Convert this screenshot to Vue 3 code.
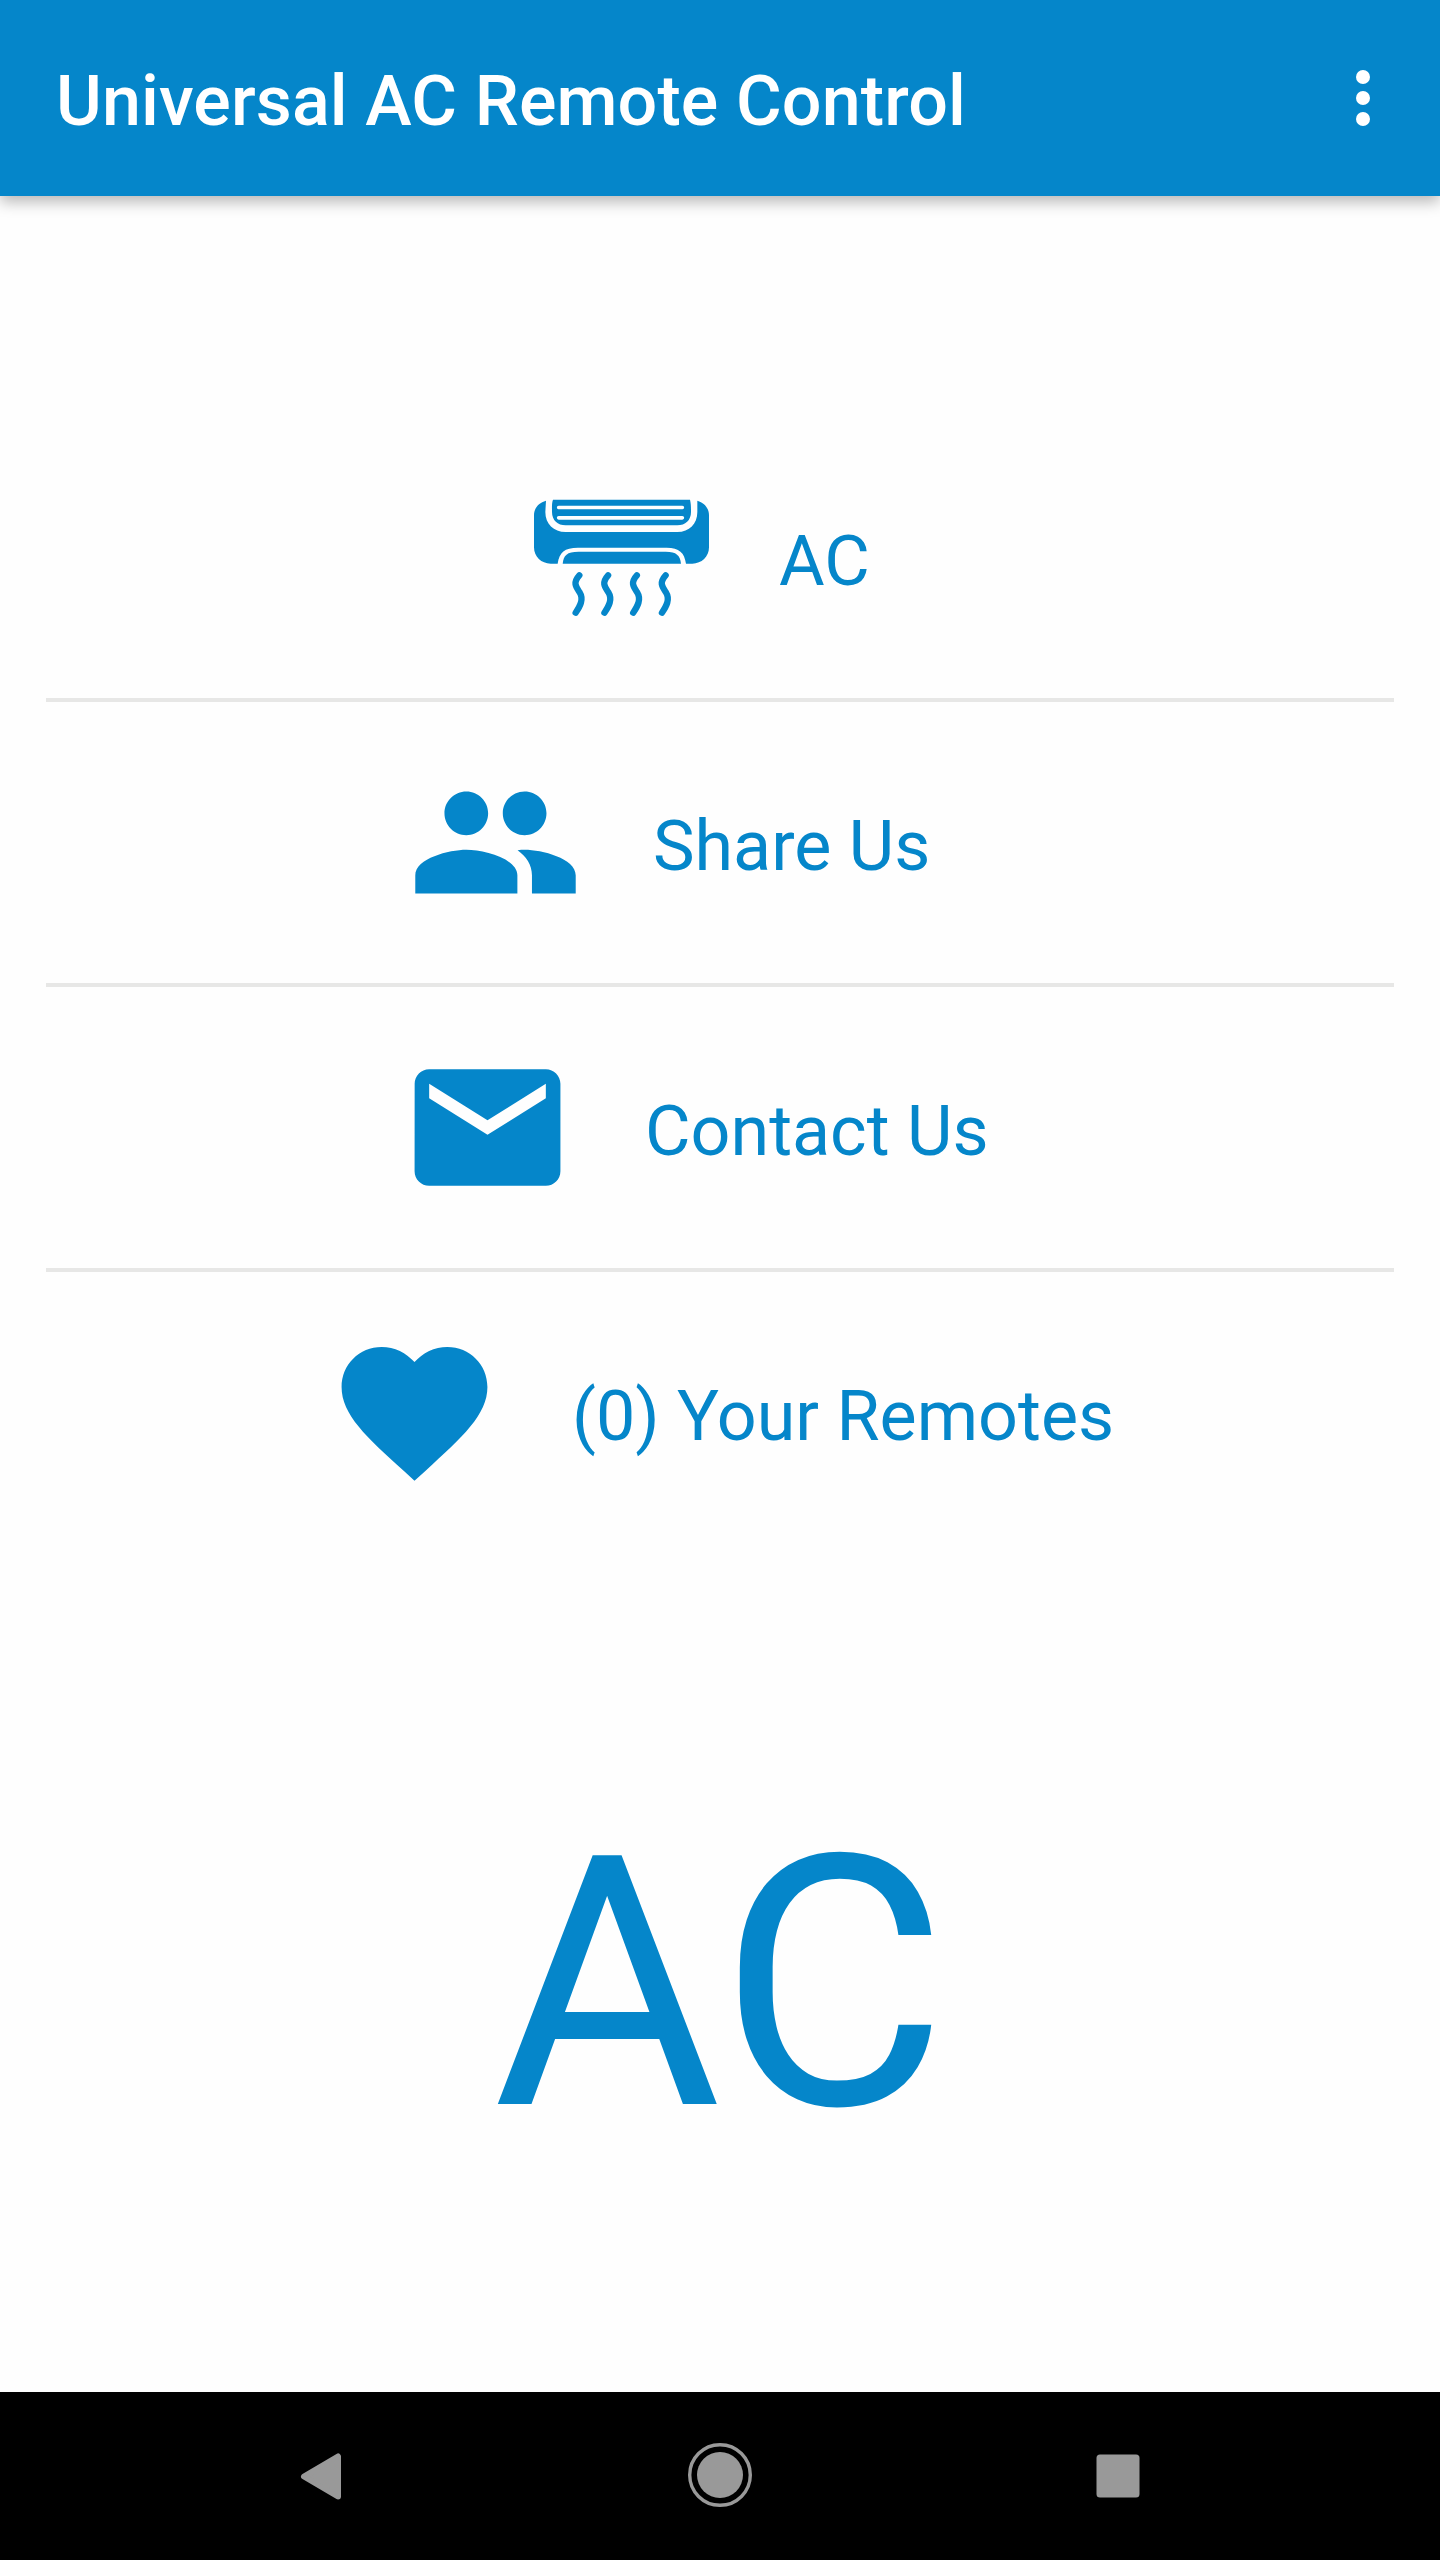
<script setup>
import { ref } from 'vue'

const title = 'Universal AC Remote Control'

const remotes = ref([])

const items = [
  { id: 'ac', label: 'AC' },
  { id: 'share', label: 'Share Us' },
  { id: 'contact', label: 'Contact Us' },
  { id: 'remotes', label: `(${remotes.value.length}) Your Remotes` }
]
</script>

<template>
  <div class="screen">
    <header class="toolbar">
      <h1 class="title">{{ title }}</h1>
      <button class="more" aria-label="More options">
        <svg viewBox="0 0 24 24" class="more-icon">
          <circle cx="12" cy="6" r="2" />
          <circle cx="12" cy="12" r="2" />
          <circle cx="12" cy="18" r="2" />
        </svg>
      </button>
    </header>

    <main class="content">
      <nav class="menu">
        <a v-for="item in items" :key="item.id" class="menu-item" :class="item.id">
          <svg v-if="item.id === 'ac'" class="icon" viewBox="0 0 525 525">
            <path d="M36 92C14 98 0 114 0 136V232C0 260 22 281 50 281H71C76 247 91 233 132 233H398C436 233 451 248 456 281H475C503 281 525 260 525 232V136C525 114 511 98 490 92V126C490 162 466 186 430 186H95C59 186 34 162 34 126Z" />
            <path fill-rule="evenodd" d="M57 89H468C471 100 471 112 471 126C471 151 454 166 430 166H95C71 166 54 151 54 126C54 112 53 100 57 89ZM74 107A5 5 0 0 0 74 118H445A5 5 0 0 0 445 107ZM74 138A5 5 0 0 0 74 149H445A5 5 0 0 0 445 138Z" />
            <path d="M86 281C89 256 98 245 134 245H395C428 245 438 256 441 281Z" />
            <path
              v-for="n in 4"
              :key="n"
              class="wave"
              :transform="`translate(${(n - 1) * 86.3} 0)`"
              d="M136 316C115 339 127 352 137 367C150 388 138 409 125 428"
            />
          </svg>
          <svg v-else-if="item.id === 'share'" class="icon" viewBox="0 0 24 24">
            <path d="M16 11c1.66 0 2.99-1.34 2.99-3S17.66 5 16 5c-1.66 0-3 1.34-3 3s1.34 3 3 3zm-8 0c1.66 0 2.99-1.34 2.99-3S9.66 5 8 5C6.34 5 5 6.34 5 8s1.34 3 3 3zm0 2c-2.33 0-7 1.17-7 3.5V19h14v-2.5c0-2.33-4.67-3.5-7-3.5zm8 0c-.29 0-.62.02-.97.05 1.16.84 1.97 1.97 1.97 3.45V19h6v-2.5c0-2.33-4.67-3.5-7-3.5z" />
          </svg>
          <svg v-else-if="item.id === 'contact'" class="icon" viewBox="0 0 24 24">
            <path d="M20 4H4c-1.1 0-1.99.9-1.99 2L2 18c0 1.1.9 2 2 2h16c1.1 0 2-.9 2-2V6c0-1.1-.9-2-2-2zm0 4l-8 5-8-5V6l8 5 8-5v2z" />
          </svg>
          <svg v-else class="icon" viewBox="0 0 24 24">
            <path d="M12 21.35l-1.45-1.32C5.4 15.36 2 12.28 2 8.5 2 5.42 4.42 3 7.5 3c1.74 0 3.41.81 4.5 2.09C13.09 3.81 14.76 3 16.5 3 19.58 3 22 5.42 22 8.5c0 3.78-3.4 6.86-8.55 11.54L12 21.35z" />
          </svg>
          <span class="label">{{ item.label }}</span>
        </a>
      </nav>

      <div class="banner">AC</div>
    </main>

    <footer class="navbar">
      <svg class="nav-icon" viewBox="0 0 84 84">
        <path class="joined" d="M25 42.5L59 22.5V62.5Z" />
      </svg>
      <svg class="nav-icon" viewBox="0 0 84 84">
        <circle class="ring" cx="42" cy="41" r="30.3" />
        <circle cx="42" cy="41" r="23" />
      </svg>
      <svg class="nav-icon" viewBox="0 0 84 84">
        <rect x="20.5" y="20.5" width="43" height="43" rx="3.5" />
      </svg>
    </footer>
  </div>
</template>

<style>
body {
  margin: 0;
}
</style>

<style scoped>
.screen {
  display: flex;
  flex-direction: column;
  width: 1440px;
  height: 2560px;
  background: #fefefe;
  color: #0586ca;
  font-family: Roboto, sans-serif;
  overflow: hidden;
}

.toolbar {
  display: flex;
  align-items: center;
  justify-content: space-between;
  box-sizing: border-box;
  height: 196px;
  padding: 0 35px 0 56px;
  background: #0586ca;
  color: #fff;
  box-shadow: 0 6px 14px rgba(0, 0, 0, 0.28);
}

.title {
  margin: 0;
  padding-top: 6px;
  font-size: 70px;
  font-weight: 500;
  line-height: 82px;
  letter-spacing: 0.12px;
  white-space: nowrap;
}

.more {
  display: flex;
  padding: 0;
  border: 0;
  background: none;
}

.more-icon {
  width: 84px;
  height: 84px;
  fill: #fff;
}

.content {
  display: flex;
  flex: 1;
  flex-direction: column;
}

.menu {
  margin: 221px 46px 0;
}

.menu-item {
  display: flex;
  align-items: center;
  gap: 70px;
  height: 281px;
  border-bottom: 4px solid #e7e7e6;
}

.menu-item:last-child {
  border-bottom: 0;
}

.ac {
  padding-left: 488px;
}

.share {
  padding-left: 362px;
}

.contact {
  padding-left: 354px;
}

.remotes {
  padding-left: 281px;
}

.icon {
  flex: none;
  width: 175px;
  height: 175px;
  fill: currentColor;
}

.wave {
  fill: none;
  stroke: currentColor;
  stroke-width: 19;
  stroke-linecap: round;
}

.label {
  padding-top: 6px;
  font-size: 70px;
  line-height: 82px;
  white-space: nowrap;
}

.banner {
  display: flex;
  flex: 1;
  align-items: center;
  justify-content: center;
  padding-top: 22px;
  font-size: 350px;
  line-height: 410px;
}

.navbar {
  display: flex;
  align-items: center;
  justify-content: space-between;
  box-sizing: border-box;
  height: 168px;
  padding: 0 280px 0 279px;
  background: #000;
}

.nav-icon {
  width: 84px;
  height: 84px;
  fill: #999;
}

.joined {
  stroke: #999;
  stroke-width: 6;
  stroke-linejoin: round;
}

.ring {
  fill: none;
  stroke: #999;
  stroke-width: 3.4;
}
</style>
